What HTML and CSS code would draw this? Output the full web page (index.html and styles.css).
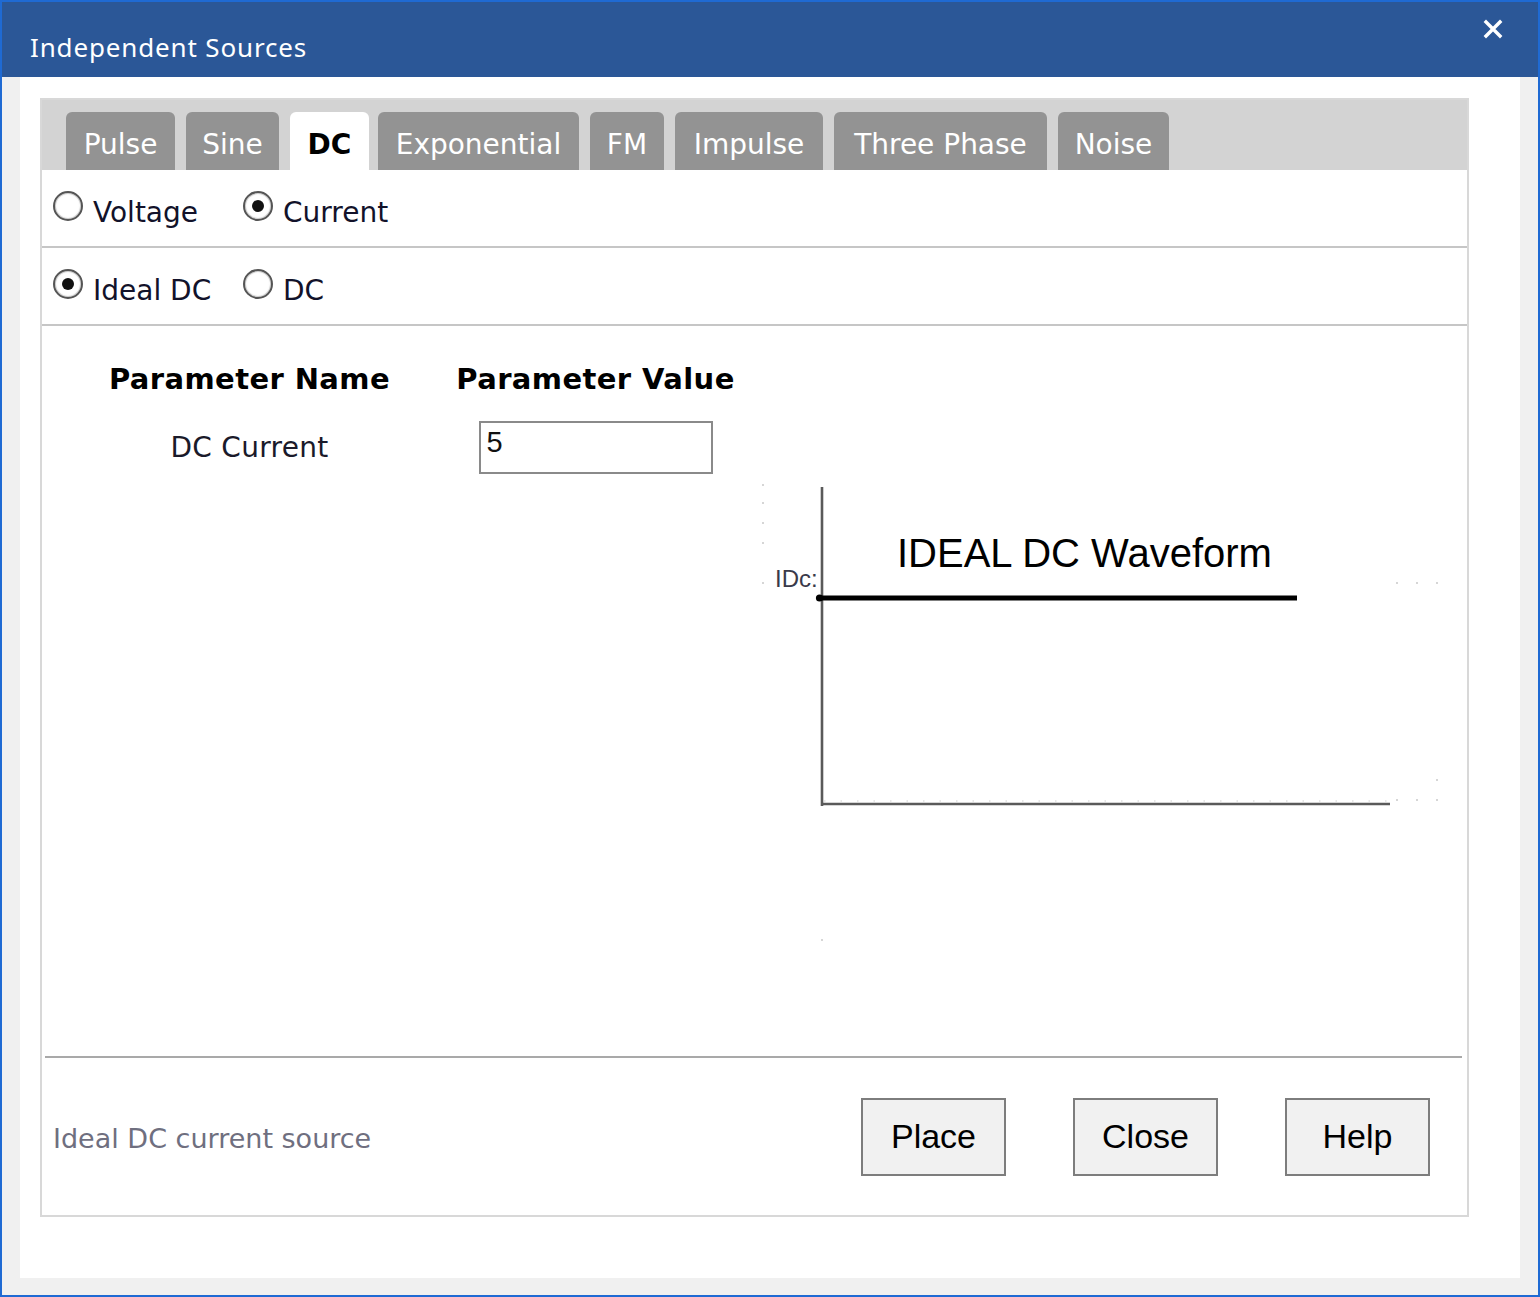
FILE: index.html
```html
<!DOCTYPE html>
<html lang="en">
<head>
<meta charset="utf-8">
<title>Independent Sources</title>
<link rel="stylesheet" href="styles.css">
</head>
<body>
<div class="window">
  <div class="titlebar">
    <span class="title">Independent Sources</span>
    <svg class="close" width="20" height="20" viewBox="0 0 20 20" aria-label="Close">
      <path d="M3 3 L17 17 M17 3 L3 17" stroke="#fff" stroke-width="3.4" stroke-linecap="square" fill="none"/>
    </svg>
  </div>
  <div class="client">
    <div class="inner">
      <div class="panel">
        <div class="tabstrip">
          <div class="tab t-pulse">Pulse</div>
          <div class="tab t-sine">Sine</div>
          <div class="tab t-dc active">DC</div>
          <div class="tab t-exp">Exponential</div>
          <div class="tab t-fm">FM</div>
          <div class="tab t-imp">Impulse</div>
          <div class="tab t-three">Three Phase</div>
          <div class="tab t-noise">Noise</div>
        </div>
        <div class="radio-row">
          <label class="radio first"><span class="circle"></span><span class="rtext">Voltage</span></label>
          <label class="radio"><span class="circle on"></span><span class="rtext">Current</span></label>
        </div>
        <div class="radio-row">
          <label class="radio first"><span class="circle on"></span><span class="rtext">Ideal DC</span></label>
          <label class="radio"><span class="circle"></span><span class="rtext">DC</span></label>
        </div>
        <div class="content">
          <div class="params">
            <div class="phead">Parameter Name</div>
            <div class="phead">Parameter Value</div>
            <div class="pname">DC Current</div>
            <div class="pinput">5</div>
          </div>
          <svg class="chart" width="680" height="465" viewBox="0 0 680 465">
            <g fill="#c8c8c8">
              <circle cx="3" cy="5" r="1"/>
              <circle cx="3" cy="23" r="1"/>
              <circle cx="3" cy="43" r="1"/>
              <circle cx="3" cy="63" r="1"/>
              <circle cx="3" cy="103" r="1"/>
              <circle cx="637" cy="103" r="1"/>
              <circle cx="657" cy="103" r="1"/>
              <circle cx="677" cy="103" r="1"/>
              <circle cx="677" cy="300" r="1"/>
              <circle cx="637" cy="320" r="1"/>
              <circle cx="657" cy="320" r="1"/>
              <circle cx="677" cy="320" r="1"/>
              <circle cx="62" cy="460" r="1"/>
            </g>
            <line x1="64" y1="321" x2="628" y2="321" stroke="#d0d0d0" stroke-width="1.2" stroke-dasharray="1.5 15"/>
            <line x1="62" y1="7" x2="62" y2="326" stroke="#5a5a5a" stroke-width="2.6"/>
            <line x1="61" y1="324" x2="630" y2="324" stroke="#5a5a5a" stroke-width="2.6"/>
            <line x1="60" y1="118" x2="537" y2="118" stroke="#000" stroke-width="5"/>
            <circle cx="59.5" cy="118" r="3.6" fill="#000"/>
            <text class="wave-title" x="137" y="87">IDEAL DC Waveform</text>
            <text class="wave-label" x="15" y="107">IDc:</text>
          </svg>
        </div>
        <div class="footer">
          <div class="desc">Ideal DC current source</div>
          <div class="buttons">
            <button class="btn">Place</button>
            <button class="btn">Close</button>
            <button class="btn">Help</button>
          </div>
        </div>
      </div>
    </div>
  </div>
</div>
</body>
</html>
```

FILE: styles.css
```css
html, body {
  margin: 0;
  padding: 0;
}

body {
  width: 1540px;
  height: 1297px;
  overflow: hidden;
  font-family: "DejaVu Sans", "Noto Sans", sans-serif;
}

.window {
  box-sizing: border-box;
  width: 1540px;
  height: 1297px;
  border: 2px solid #1f6ad3;
  background: #f0f0f0;
  display: flex;
  flex-direction: column;
}

.titlebar {
  height: 75px;
  flex: 0 0 75px;
  background: #2b5797;
  display: flex;
  align-items: flex-start;
  padding: 0 35px 0 28px;
}

.title {
  margin-top: 30px;
  line-height: 30px;
  font-family: "Noto Sans", "Open Sans", sans-serif;
  font-size: 26px;
  color: #ffffff;
  letter-spacing: 0.85px;
}

.close {
  margin-left: auto;
  margin-top: 17px;
  display: block;
}

.client {
  flex: 1;
  display: flex;
  padding: 0 18px 17px 18px;
}

.inner {
  flex: 1;
  display: flex;
  background: #ffffff;
  padding: 21px 51px 61px 20px;
}

.panel {
  flex: 1;
  display: flex;
  flex-direction: column;
  border: 2px solid #d8d8d8;
}

.tabstrip {
  height: 70px;
  flex: 0 0 70px;
  box-sizing: border-box;
  background: #d3d3d3;
  display: flex;
  align-items: flex-end;
  gap: 11px;
  padding-left: 24px;
}

.tab {
  height: 58px;
  box-sizing: border-box;
  padding-top: 8px;
  line-height: 50px;
  text-align: center;
  background: #939393;
  color: #ffffff;
  font-size: 28px;
  border-radius: 6px 6px 0 0;
  white-space: nowrap;
}

.t-pulse { width: 109px; }
.t-sine { width: 93px; }
.t-dc { width: 79px; margin-right: -2px; }
.t-exp { width: 201px; }
.t-fm { width: 74px; }
.t-imp { width: 148px; }
.t-three { width: 213px; }
.t-noise { width: 111px; }

.tab.active {
  background: #ffffff;
  color: #000000;
  font-weight: bold;
}

.radio-row {
  height: 76px;
  flex: 0 0 76px;
  display: flex;
  align-items: center;
  padding-left: 11px;
  border-bottom: 2px solid #c6c6c6;
}

.radio {
  display: flex;
  align-items: center;
  gap: 10px;
  font-size: 28px;
  color: #12122a;
}

.radio.first {
  width: 190px;
}

.rtext {
  margin-top: 8px;
}

.circle {
  box-sizing: border-box;
  width: 30px;
  height: 30px;
  border-radius: 50%;
  border: 2px solid #555555;
  background: radial-gradient(circle, #ffffff 55%, #e6e6e6 100%);
  box-shadow: inset 0 0 0 1px #d0d0d0;
  margin-top: -4px;
  position: relative;
}

.circle.on::after {
  content: "";
  position: absolute;
  left: 7px;
  top: 7px;
  width: 12px;
  height: 12px;
  border-radius: 50%;
  background: #111111;
}

.content {
  flex: 1;
  display: flex;
  flex-direction: column;
}

.params {
  display: grid;
  grid-template-columns: 339px 353px;
  row-gap: 22px;
  margin: 33px 0 0 38px;
}

.phead {
  text-align: center;
  font-weight: bold;
  font-size: 29px;
  line-height: 40px;
  color: #000000;
  letter-spacing: 0.4px;
}

.pname {
  align-self: center;
  text-align: center;
  font-size: 28px;
  color: #1a1a2a;
  letter-spacing: 0.3px;
}

.pinput {
  justify-self: center;
  box-sizing: border-box;
  width: 234px;
  height: 53px;
  border: 2px solid #8a8a8a;
  padding: 3px 0 0 6px;
  font-family: "Liberation Sans", Arial, sans-serif;
  font-size: 29px;
  line-height: 32px;
  color: #111111;
}

.chart {
  display: block;
  margin: 6px 0 0 718px;
}

.wave-title {
  font-family: "Liberation Sans", Arial, sans-serif;
  font-size: 40px;
  fill: #000000;
}

.wave-label {
  font-family: "Liberation Sans", Arial, sans-serif;
  font-size: 24px;
  fill: #3a3a4a;
}

.footer {
  height: 157px;
  flex: 0 0 157px;
  margin: 0 5px 0 3px;
  border-top: 2px solid #a9a9a9;
  display: flex;
  align-items: center;
  padding: 0 32px 0 8px;
}

.desc {
  font-size: 27px;
  color: #6f6f7f;
  margin-top: 4px;
}

.buttons {
  margin-left: auto;
  display: flex;
  gap: 67px;
}

.btn {
  box-sizing: border-box;
  width: 145px;
  height: 78px;
  background: #f1f1f1;
  border: 2px solid #7d7d7d;
  border-radius: 0;
  font-family: "Liberation Sans", Arial, sans-serif;
  font-size: 34px;
  color: #000000;
  padding: 0;
}
```
